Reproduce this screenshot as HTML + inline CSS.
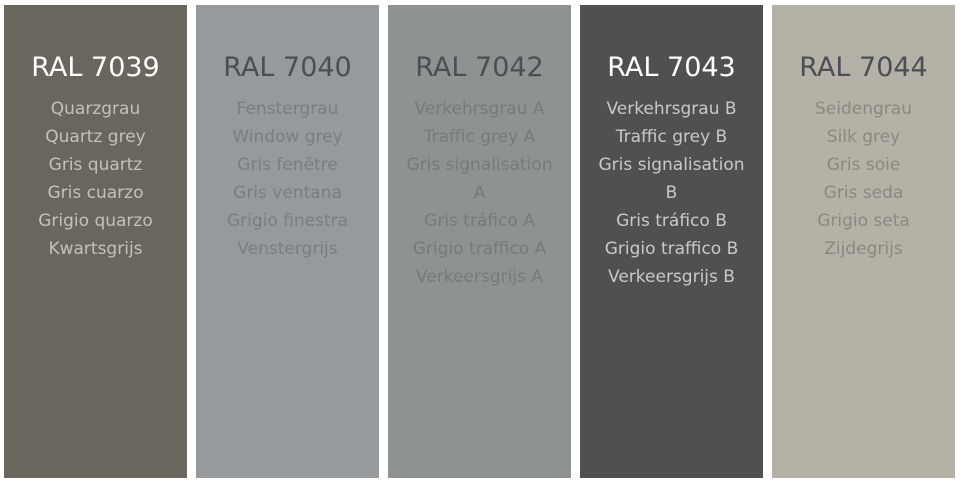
<!DOCTYPE html>
<html><head><style>
html,body{margin:0;padding:0;width:960px;height:482px;background:#fff;overflow:hidden}
.c{position:absolute;top:5px;width:183px;height:473px;text-align:center;font-family:"DejaVu Sans","Liberation Sans",sans-serif}
.t{position:absolute;top:46px;left:0;right:0;font-size:27px;line-height:34px}
.l{position:absolute;top:90px;left:0;right:0;font-size:17px;line-height:28px}
</style></head><body>
<div class="c" style="left:4px;background:#6a665e"><div class="t" style="color:#fff">RAL 7039</div><div class="l" style="color:#c4c1ba">Quarzgrau<br>Quartz grey<br>Gris quartz<br>Gris cuarzo<br>Grigio quarzo<br>Kwartsgrijs</div></div>
<div class="c" style="left:196px;background:#969a9d"><div class="t" style="color:#4a4f55">RAL 7040</div><div class="l" style="color:#7b7e81">Fenstergrau<br>Window grey<br>Gris fenêtre<br>Gris ventana<br>Grigio finestra<br>Venstergrijs</div></div>
<div class="c" style="left:388px;background:#8e9290"><div class="t" style="color:#4a4f55">RAL 7042</div><div class="l" style="color:#767a79">Verkehrsgrau A<br>Traffic grey A<br>Gris signalisation<br>A<br>Gris tráfico A<br>Grigio traffico A<br>Verkeersgrijs A</div></div>
<div class="c" style="left:580px;background:#4e5150"><div class="t" style="color:#fff">RAL 7043</div><div class="l" style="color:#c8c9c8">Verkehrsgrau B<br>Traffic grey B<br>Gris signalisation<br>B<br>Gris tráfico B<br>Grigio traffico B<br>Verkeersgrijs B</div></div>
<div class="c" style="left:772px;background:#b5b1a6"><div class="t" style="color:#4a4f55">RAL 7044</div><div class="l" style="color:#8b8880">Seidengrau<br>Silk grey<br>Gris soie<br>Gris seda<br>Grigio seta<br>Zijdegrijs</div></div>
</body></html>
